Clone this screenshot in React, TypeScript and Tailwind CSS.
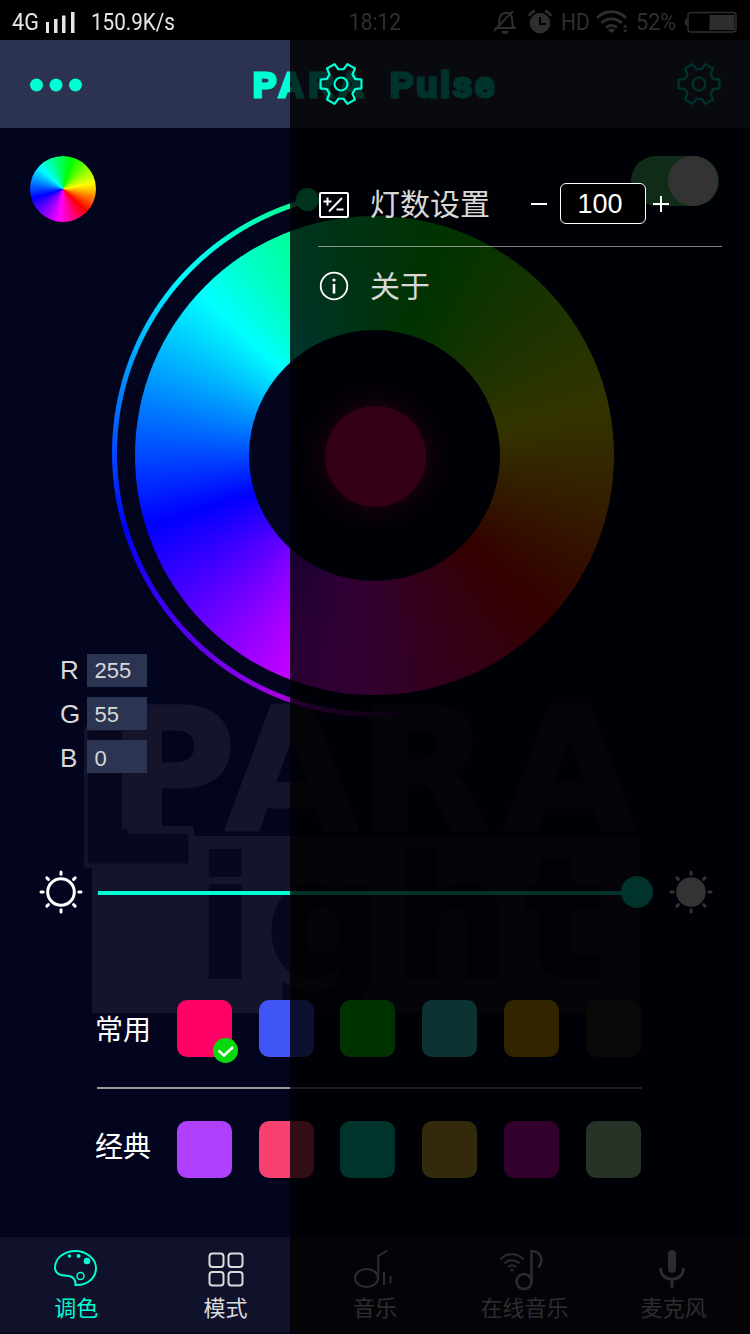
import React from "react";

const polar = (r: number, deg: number) => {
  const a = (deg * Math.PI) / 180;
  return `${(r * Math.cos(a)).toFixed(2)},${(r * Math.sin(a)).toFixed(2)}`;
};

const gearPoints = [0, 60, 120, 180, 240, 300]
  .map((a) => [polar(15, a - 20), polar(20.9, a - 12), polar(20.9, a + 12), polar(15, a + 20)].join(" "))
  .join(" ");

function Gear() {
  return (
    <svg className="h-11 w-11" viewBox="-22 -22 44 44" fill="none" stroke="#00ffd5" strokeWidth="2.200" strokeLinejoin="round">
      <polygon points={gearPoints} />
      <circle r="6.500" />
    </svg>
  );
}

function StatusBar() {
  return (
    <div className="flex h-10 w-full bg-black pt-[6px] font-[Roboto,sans-serif] text-[24px] leading-8 text-[#e6e6e6]">
      <div className="ml-3 w-[34px]">
        <span className="inline-block origin-left scale-x-[.9]">4G</span>
      </div>
      <svg className="h-8 w-[30px]" viewBox="0 0 30 32" fill="#e6e6e6">
        <rect x="0" y="16" width="3" height="11" />
        <rect x="8" y="13" width="3.500" height="14" />
        <rect x="16" y="9.500" width="3.500" height="17.500" />
        <rect x="25" y="6" width="3.500" height="21" />
      </svg>
      <div className="ml-[15px] w-[258px]">
        <span className="inline-block origin-left scale-x-[.86]">150.9K/s</span>
      </div>
      <div className="w-[143px]">
        <span className="inline-block origin-left scale-x-[.87]">18:12</span>
      </div>
      <svg className="ml-px h-8 w-6" viewBox="0 0 24 32" fill="none" stroke="#e6e6e6" strokeWidth="2">
        <path d="M2 22h21M5 21c2-3 1-7 2-10 1-4 8-6 11-2 2 3 0 9 3 13" />
        <path d="M1 25 20 5" />
        <path d="M8.500 25a3.500 3 0 0 0 7 0z" fill="#e6e6e6" stroke="none" />
      </svg>
      <svg className="ml-[11px] h-8 w-6" viewBox="0 0 24 32" fill="#e6e6e6">
        <circle cx="12" cy="17" r="10.300" />
        <path d="M12 11v7h6" stroke="#000" strokeWidth="2.200" fill="none" />
        <path d="M1 10a9 9 0 0 1 6-5M23 10a9 9 0 0 0-6-5" stroke="#e6e6e6" strokeWidth="2.400" fill="none" />
      </svg>
      <div className="ml-[9px] w-[35px]">
        <span className="inline-block origin-left scale-x-[.88]">HD</span>
      </div>
      <svg className="h-8 w-8" viewBox="0 0 32 32" fill="none" stroke="#e6e6e6" strokeWidth="2.800">
        <path d="M1 12a20 20 0 0 1 29 0M5.500 17a14 14 0 0 1 20 0M10 21.500a8 8 0 0 1 11 0" />
        <path d="M12 24a5 5 0 0 1 7 0l-3.500 3z" fill="#e6e6e6" stroke="none" />
        <path d="M27 21.500 29.200 18l2.200 3.500zM27 23.500l2.200 3.500 2.200-3.500z" fill="#e6e6e6" stroke="none" />
      </svg>
      <div className="ml-[8px] w-[47px]">
        <span className="inline-block origin-left scale-x-[.9]">52%</span>
      </div>
      <svg className="h-8 w-14" viewBox="0 0 56 32" fill="none" stroke="#e6e6e6" strokeWidth="1.500">
        <rect x="5" y="6.500" width="48" height="19.500" rx="3" />
        <rect x="26.500" y="9" width="25" height="15" fill="#e6e6e6" stroke="none" />
        <path d="M4 12v8c-3-1-3-7 0-8z" fill="#e6e6e6" stroke="none" />
      </svg>
    </div>
  );
}

function Header() {
  return (
    <header className="flex h-22 w-full items-center bg-[#2b3350]">
      <svg className="mt-px ml-[29px] h-4 w-[54px]" viewBox="0 0 54 16" fill="#00ffd5">
        <circle cx="7.500" cy="8" r="6.500" />
        <circle cx="27" cy="8" r="6.500" />
        <circle cx="46.500" cy="8" r="6.500" />
      </svg>
      <h1 className="mt-[2px] ml-[168px] flex w-[426px] pl-[2px] font-['Liberation_Sans',sans-serif] text-[35px] leading-[44px] font-bold text-[#00ffd5] [-webkit-text-stroke:3px_#00ffd5]">
        <span className="w-[137px] tracking-[4.7px]">PARA</span>
        <span className="tracking-[2.8px]">Pulse</span>
      </h1>
      <Gear />
    </header>
  );
}

function Watermark() {
  return (
    <svg
      className="absolute top-[690px] left-[80px] h-[330px] w-[570px]"
      viewBox="80 690 570 330"
      fontFamily="DejaVu Sans, sans-serif"
      fontWeight="bold"
    >
      <defs>
        <clipPath id="plate">
          <rect x="92" y="836" width="547" height="177" />
        </clipPath>
      </defs>
      <g fill="#14152d">
        <text x="110 225 358 503" y="830" fontSize="172" stroke="#14152d" strokeWidth="3" strokeLinejoin="round">
          PARA
        </text>
        <rect x="92" y="836" width="547" height="177" />
        <rect x="84" y="726" width="50" height="142" rx="4" />
        <rect x="84" y="826" width="110" height="42" rx="4" />
      </g>
      <text transform="translate(73.500 860.500) scale(1.060 1)" fontSize="174" fill="#070820" stroke="#070820" strokeWidth="5" strokeLinejoin="round">
        L
      </text>
      <rect x="122" y="706" width="40" height="123.500" fill="#14152d" />
      <text x="197 266 393 524" y="976.500" fontSize="165" fill="#070820" stroke="#070820" strokeWidth="4" clipPath="url(#plate)">
        ight
      </text>
    </svg>
  );
}

const channelText = "block h-[33px] leading-[33px]";

function Channel({ name, value, shift }: { name: string; value: string; shift: string }) {
  return (
    <div className="flex h-[33px]">
      <span className={`${channelText} ${shift} w-[27px] shrink-0 text-[26px]`}>{name}</span>
      <span className="h-[33px] w-[60px] bg-[#2b3450] pl-[7.5px] text-[22px]">
        <span className={`${channelText} ${shift}`}>{value}</span>
      </span>
    </div>
  );
}

function ColorArea() {
  return (
    <section className="relative flex h-[645px] w-full">
      <div className="z-10 flex w-[135px] flex-col justify-between pt-7">
        <div className="ml-[30px] h-[66px] w-[66px] rounded-full bg-[conic-gradient(#00ff44_0deg,#00ff00_17deg,#ffff00_79deg,#ff0000_133deg,#ff00ff_186deg,#0000ff_253deg,#00ffff_313deg,#00ff44_360deg)]" />
        <div className="flex w-[147px] flex-col gap-[10px] pl-[60px] font-['Liberation_Sans',sans-serif] text-[#d8d8d8]">
          <Channel name="R" value="255" shift="pt-0" />
          <Channel name="G" value="55" shift="pt-px" />
          <Channel name="B" value="0" shift="pt-[2px]" />
        </div>
      </div>
      <div className="relative mt-[88px] h-[479px] w-[479px] shrink-0">
        <div className="absolute top-[-29px] left-[-25px] h-[532px] w-[532px] bg-[conic-gradient(transparent_0deg,transparent_170deg,#70008800_171deg,#7a0099_186deg,#a800dd_200deg,#0000ff_253deg,#00ffff_313deg,#00ff88_345deg,transparent_346deg)] mask-[radial-gradient(circle,transparent_258.500px,#000_259.500px,#000_263.500px,transparent_264.500px)]" />
        <div className="absolute top-[-28px] left-[161px] h-[23px] w-[23px] rounded-full bg-[#00ff88]" />
        <div className="h-full w-full rounded-full bg-[conic-gradient(#00ff44_0deg,#00ff00_17deg,#ffff00_79deg,#ff0000_133deg,#ff00ff_186deg,#0000ff_253deg,#00ffff_313deg,#00ff44_360deg)] p-[114px]">
          <div className="flex h-full w-full items-center justify-center rounded-full bg-[#03051e]">
            <div className="mt-[2px] ml-[2px] h-[101px] w-[101px] rounded-full bg-[#ff0070] shadow-[0_0_28px_4px_#ff007090]" />
          </div>
        </div>
      </div>
      <div className="mt-7 ml-[17px] flex h-[50px] w-[88px] justify-end rounded-full bg-[#52d774] pr-px">
        <div className="h-[50px] w-[50px] rounded-full bg-white" />
      </div>
    </section>
  );
}

function Sun({ filled = false }: { filled?: boolean }) {
  return (
    <svg className="h-11 w-11" viewBox="-22 -22 44 44" fill={filled ? "#fff" : "none"} stroke="#fff" strokeWidth="3" strokeLinecap="round">
      <circle r="13.300" />
      {[0, 45, 90, 135, 180, 225, 270, 315].map((a) => (
        <path key={a} d="M17.800 0H20" transform={`rotate(${a})`} />
      ))}
    </svg>
  );
}

function Brightness() {
  return (
    <div className="mt-[97px] flex h-11 items-center pl-[39px]">
      <Sun />
      <div className="relative ml-[15px] flex h-11 w-[555px] items-center">
        <div className="mt-[2px] h-1 w-[530px] bg-[#00ffd5]" />
        <div className="absolute top-[6px] right-0 h-8 w-8 rounded-full bg-[#00ffd5]" />
      </div>
      <div className="ml-4">
        <Sun filled />
      </div>
    </div>
  );
}

function Swatches({ label, children }: { label: React.ReactNode; children: React.ReactNode }) {
  return (
    <div className="flex h-[57px] pl-[95px]">
      <span className="w-[82px] shrink-0 text-[28px] text-white">{label}</span>
      <div className="flex w-[463.6px] justify-between">{children}</div>
    </div>
  );
}

const box = "h-[57px] w-[55px] rounded-[10px]";

function Palette() {
  return (
    <section className="mt-[86px]">
      <Swatches label={<span className="block leading-[57px]">常用</span>}>
        <div className={`${box} relative bg-[#ff0064]`}>
          <svg className="absolute right-[-6px] bottom-[-6px] h-[25px] w-[25px]" viewBox="0 0 25 25">
            <circle cx="12.500" cy="12.500" r="12.500" fill="#07d90d" />
            <path d="m5.500 12.500 5.500 5 9-8.500" fill="none" stroke="#fff" strokeWidth="2.500" />
          </svg>
        </div>
        <div className={`${box} bg-[#4055f5]`} />
        <div className={`${box} bg-[#00ff00]`} />
        <div className={`${box} bg-[#32fff8]`} />
        <div className={`${box} bg-[#ffb400]`} />
        <div className={`${box} bg-[#28281e]`} />
      </Swatches>
      <div className="mt-[30px] mb-[32px] ml-[97px] h-[2px] w-[545px] bg-[#9b9c98]" />
      <Swatches label={<span className="block leading-[48px]">经典</span>}>
        <div className={`${box} bg-[#b040ff]`} />
        <div className={`${box} bg-[#f84070]`} />
        <div className={`${box} bg-[#00ffd2]`} />
        <div className={`${box} bg-[#ffcd37]`} />
        <div className={`${box} bg-[#ff00e6]`} />
        <div className={`${box} bg-[#beffbe]`} />
      </Swatches>
    </section>
  );
}

function Tab({ label, active = false, children }: { label: string; active?: boolean; children: React.ReactNode }) {
  return (
    <div className={`flex flex-1 flex-col items-center pt-[9px] ${active ? "text-[#00ffd5]" : "text-[#dcdcdc]"}`}>
      <svg className="h-11 w-12" viewBox="0 0 48 44" fill="none" stroke="currentColor" strokeWidth="2">
        {children}
      </svg>
      <span className="ml-[3px] text-[22px] leading-8 whitespace-nowrap">{label}</span>
    </div>
  );
}

function TabBar() {
  return (
    <nav className="mt-auto flex h-[97px] w-full border-b-2 border-[#08091f] bg-[#10112a] pr-[3px]">
      <Tab label="调色" active>
        <path d="M24.500 38.500C25 33 21.500 30 18 29.500 13 29 4 29.500 4 21 4 11 14 4.500 24.500 4.500S45 12 45 21.500C45 31 37 39 24.500 38.500z" transform="translate(0 .500)" />
        <circle cx="18.500" cy="10" r="1.700" fill="currentColor" stroke="none" />
        <circle cx="27.500" cy="10" r="2" fill="currentColor" stroke="none" />
        <circle cx="36" cy="15" r="3.300" fill="currentColor" stroke="none" />
        <circle cx="29.500" cy="30" r="3.500" strokeWidth="1.500" />
      </Tab>
      <Tab label="模式">
        <rect x="9.500" y="7.500" width="14" height="13.500" rx="3" />
        <rect x="28.500" y="7.500" width="14" height="13.500" rx="3" />
        <rect x="9.500" y="26" width="14" height="13.500" rx="3" />
        <rect x="28.500" y="26" width="14" height="13.500" rx="3" />
      </Tab>
      <Tab label="音乐">
        <ellipse cx="16.500" cy="32" rx="11.500" ry="9" />
        <path d="M28 33c0-6 1-13 0-23l9.500-5.500M34 26v13M40.500 29.500v8" />
      </Tab>
      <Tab label="在线音乐">
        <circle cx="25" cy="35.500" r="7.500" strokeWidth="2.500" />
        <path d="M32.500 36V5c9 0 13 9 7 16.500" strokeWidth="2.500" />
        <path d="M1.500 13.500c6-7 17-7 23 0M5.500 17.500c4-4.500 11-4.500 15 0M9.500 21c2-2.500 5-2.500 7.500 0" />
        <circle cx="13" cy="24" r="1.500" fill="currentColor" stroke="none" />
      </Tab>
      <Tab label="麦克风">
        <rect x="20" y="4" width="8" height="23" rx="4" fill="currentColor" stroke="none" />
        <path d="M12.500 22c0 15 23 15 23 0M24 33v9" strokeWidth="3" />
      </Tab>
    </nav>
  );
}

function SettingsPanel() {
  return (
    <aside className="absolute top-0 right-0 z-20 h-[1334px] w-[460px] bg-black/80 pt-[62px] pr-7 pl-[28px] text-[30px] text-[#d8d8d8]">
      <div className="ml-px">
        <Gear />
      </div>
      <div className="mt-[57px] flex h-[84px] items-start border-b border-white/50">
        <svg className="mt-[28px] ml-px h-7 w-[30px]" viewBox="0 0 30 28" fill="none" stroke="#fff" strokeWidth="2">
          <rect x="1" y="2" width="28" height="24" rx="1" />
          <path d="M4.500 10.500h8M8.500 6.500v8M10 20.500 23 7M17.500 18.500h7" strokeWidth="2" />
        </svg>
        <span className="mt-[17px] ml-[21px] w-[161px] leading-[44px]">灯数设置</span>
        <svg className="mt-[31px] h-5 w-4" viewBox="0 0 16 20" stroke="#fff" strokeWidth="2">
          <path d="M0 10h16" />
        </svg>
        <div className="mt-[20px] ml-[13px] h-[41px] w-[86px] rounded-[6px] border border-white bg-black pr-[6px] text-center font-['Liberation_Sans',sans-serif] text-[27px] leading-[40px] text-white">
          100
        </div>
        <svg className="mt-[31px] ml-[7px] h-5 w-4" viewBox="0 0 16 20" stroke="#fff" strokeWidth="2">
          <path d="M0 10h16M8 2v16" />
        </svg>
      </div>
      <div className="flex h-[78px] items-center">
        <svg className="h-8 w-8" viewBox="-16 -16 32 32" fill="none" stroke="#fff" strokeWidth="1.800">
          <circle r="13.300" />
          <path d="M0-2V7.500" strokeWidth="2.600" />
          <circle cy="-6" r="1.600" fill="#fff" stroke="none" />
        </svg>
        <span className="mb-[3px] ml-[20px]">关于</span>
      </div>
    </aside>
  );
}

export default function App() {
  return (
    <div className="relative flex h-[1334px] w-[750px] flex-col overflow-hidden bg-[#03051e] font-['Noto_Sans_CJK_SC',sans-serif]">
      <Watermark />
      <div className="relative flex h-full flex-col">
        <StatusBar />
        <Header />
        <ColorArea />
        <Brightness />
        <Palette />
        <TabBar />
      </div>
      <SettingsPanel />
    </div>
  );
}
